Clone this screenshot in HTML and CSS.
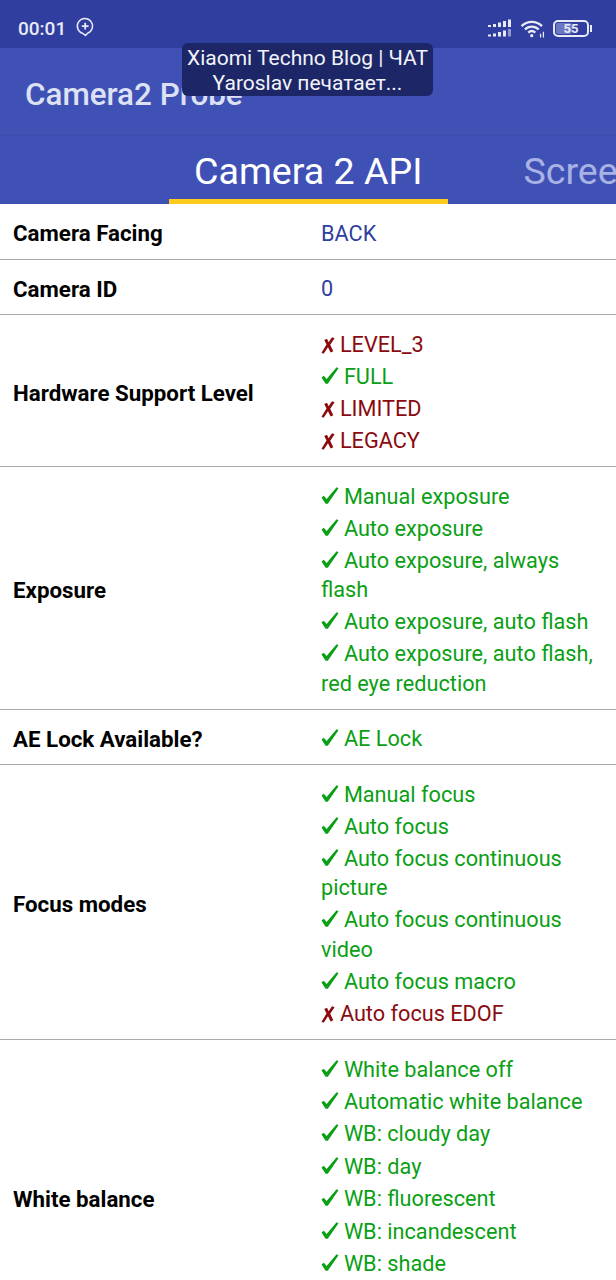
FILE: index.html
```html
<!DOCTYPE html>
<html lang="en">
<head>
  <meta charset="UTF-8">
  <title>Camera2 Probe</title>
  <link rel="stylesheet" href="styles.css">
</head>
<body>

  <svg class="sprite">
    <symbol id="check" viewBox="0 0 18 17">
      <path d="M0.500 10.500 L2.800 8.800 L5.600 12 L15.600 0.300 L17.500 1.200 L6.800 16.700 L4.600 16.700 Z"/>
    </symbol>
    <symbol id="cross" viewBox="0 0 14 17">
      <path d="M11 0.300 L13.600 1.300 L9.200 7.800 L12.300 14.200 L9.600 15.600 L7 10.300 L2.600 16.800 L0.500 15.800 L5.500 7.600 L3.300 3 L6 1.800 L7.600 5.200 Z"/>
    </symbol>
  </svg>

  <div class="status-bar">
    <span class="clock">00:01</span>
    <svg class="chat-icon" width="20" height="20" viewBox="0 0 20 20" fill="none" stroke="#e8eaf6">
      <path d="M10.500 18.500 L7.800 16.400 A7.600 7.600 0 1 1 12.600 16.200 Z" stroke-width="1.500" stroke-linejoin="round"/>
      <path d="M6.800 9.200H13.600M10.200 5.800V12.600" stroke-width="1.800"/>
    </svg>
    <div class="status-right">
      <svg width="24" height="18" viewBox="0 0 24 18" fill="#e8eaf6">
        <rect x="0" y="6" width="3" height="2"/><rect x="5" y="5" width="3" height="3"/><rect x="10" y="3.500" width="3" height="4.500"/><rect x="15" y="2" width="3" height="6"/><rect x="20" y="0.500" width="3" height="7.500"/>
        <rect x="0" y="15.500" width="3" height="2"/><rect x="5" y="14.500" width="3" height="3"/><rect x="10" y="13" width="3" height="4.500"/><rect x="15" y="11.500" width="3" height="6"/><rect x="20" y="10" width="3" height="7.500" fill="#8f98cf"/>
      </svg>
      <svg class="wifi" width="25" height="19" viewBox="0 0 26 20" fill="none" stroke="#e8eaf6" stroke-width="2.400">
        <path d="M1.500 7.500C7.500 1.500 17 1.500 23 7.500"/>
        <path d="M5 11C9 7 15.500 7 19.500 11"/>
        <path d="M8.500 14.300C10.800 12.300 13.700 12.300 16 14.300"/>
        <circle cx="12.200" cy="17.500" r="1.700" fill="#e8eaf6" stroke="none"/>
        <path d="M21.500 19.500V15.500M24.500 19.500V13.500" stroke-width="1.300"/>
      </svg>
      <div class="battery">
        <div class="battery-body">
          <div class="battery-fill"></div>
          <span class="battery-num">55</span>
        </div>
        <div class="battery-tip"></div>
      </div>
    </div>
  </div>

  <div class="toolbar">Camera2 Probe</div>

  <div class="tabs">
    <div class="tab tab-active">Camera 2 API</div>
    <div class="tab">Screen</div>
  </div>

  <div class="row">
    <div class="label">Camera Facing</div>
    <div class="value"><div class="plain">BACK</div></div>
  </div>
  <div class="row">
    <div class="label">Camera ID</div>
    <div class="value"><div class="plain">0</div></div>
  </div>
  <div class="row">
    <div class="label">Hardware Support Level</div>
    <div class="value">
      <div class="no"><svg class="x-mark"><use href="#cross"/></svg> LEVEL_3</div>
      <div class="yes"><svg class="mark"><use href="#check"/></svg> FULL</div>
      <div class="no"><svg class="x-mark"><use href="#cross"/></svg> LIMITED</div>
      <div class="no"><svg class="x-mark"><use href="#cross"/></svg> LEGACY</div>
    </div>
  </div>
  <div class="row">
    <div class="label">Exposure</div>
    <div class="value">
      <div class="yes"><svg class="mark"><use href="#check"/></svg> Manual exposure</div>
      <div class="yes"><svg class="mark"><use href="#check"/></svg> Auto exposure</div>
      <div class="yes"><svg class="mark"><use href="#check"/></svg> Auto exposure, always flash</div>
      <div class="yes"><svg class="mark"><use href="#check"/></svg> Auto exposure, auto flash</div>
      <div class="yes"><svg class="mark"><use href="#check"/></svg> Auto exposure, auto flash, red eye reduction</div>
    </div>
  </div>
  <div class="row">
    <div class="label">AE Lock Available?</div>
    <div class="value"><div class="yes"><svg class="mark"><use href="#check"/></svg> AE Lock</div></div>
  </div>
  <div class="row">
    <div class="label">Focus modes</div>
    <div class="value">
      <div class="yes"><svg class="mark"><use href="#check"/></svg> Manual focus</div>
      <div class="yes"><svg class="mark"><use href="#check"/></svg> Auto focus</div>
      <div class="yes"><svg class="mark"><use href="#check"/></svg> Auto focus continuous picture</div>
      <div class="yes"><svg class="mark"><use href="#check"/></svg> Auto focus continuous video</div>
      <div class="yes"><svg class="mark"><use href="#check"/></svg> Auto focus macro</div>
      <div class="no"><svg class="x-mark"><use href="#cross"/></svg> Auto focus EDOF</div>
    </div>
  </div>
  <div class="row">
    <div class="label">White balance</div>
    <div class="value value-long">
      <div class="yes"><svg class="mark"><use href="#check"/></svg> White balance off</div>
      <div class="yes"><svg class="mark"><use href="#check"/></svg> Automatic white balance</div>
      <div class="yes"><svg class="mark"><use href="#check"/></svg> WB: cloudy day</div>
      <div class="yes"><svg class="mark"><use href="#check"/></svg> WB: day</div>
      <div class="yes"><svg class="mark"><use href="#check"/></svg> WB: fluorescent</div>
      <div class="yes"><svg class="mark"><use href="#check"/></svg> WB: incandescent</div>
      <div class="yes"><svg class="mark"><use href="#check"/></svg> WB: shade</div>
      <div class="yes"><svg class="mark"><use href="#check"/></svg> WB: twilight</div>
      <div class="yes"><svg class="mark"><use href="#check"/></svg> WB: warm fluorescent</div>
    </div>
  </div>

  <div class="toast">
    <div>Xiaomi Techno Blog | ЧАТ</div>
    <div>Yaroslav печатает...</div>
  </div>

</body>
</html>
```

FILE: styles.css
```css
html, body {
  height: 1280px;
  overflow: hidden;
}

body {
  margin: 0;
  position: relative;
  font-family: Roboto, sans-serif;
  background-color: white;
}

.sprite {
  display: none;
}

.status-bar {
  height: 48px;
  box-sizing: border-box;
  display: flex;
  align-items: center;
  padding: 8px 24px 0 18px;
  background-color: #303f9f;
  color: #e8eaf6;
}

.clock {
  font-size: 19px;
  font-weight: 500;
}

.chat-icon {
  margin-left: 9px;
  margin-top: -2px;
}

.status-right {
  margin-left: auto;
  display: flex;
  align-items: center;
  gap: 8px;
}

.battery {
  display: flex;
  align-items: center;
  gap: 1px;
}

.battery-body {
  width: 36px;
  height: 17px;
  box-sizing: border-box;
  border: 2px solid #e8eaf6;
  border-radius: 5px;
  position: relative;
  display: flex;
  align-items: center;
  justify-content: center;
}

.battery-fill {
  position: absolute;
  left: 1px;
  top: 1px;
  bottom: 1px;
  width: 16px;
  border-radius: 2px;
  background-color: #6b78c4;
}

.battery-num {
  position: relative;
  font-size: 13px;
  font-weight: 700;
}

.battery-tip {
  width: 2px;
  height: 7px;
  background-color: #e8eaf6;
}

.toolbar {
  height: 88px;
  box-sizing: border-box;
  padding: 27px 0 0 25px;
  background-color: #3f51b5;
  color: #dde1f4;
  font-size: 31.4px;
  font-weight: 500;
  line-height: 40px;
  border-bottom: 1px solid #3b4cab;
}

.tabs {
  height: 68px;
  display: flex;
  padding-left: 169px;
  background-color: #3f51b5;
  overflow: hidden;
  white-space: nowrap;
}

.tab {
  padding: 0 25px;
  font-size: 37.6px;
  line-height: 70px;
  color: #a9b2e4;
}

.tab-active {
  height: 63px;
  padding-right: 26px;
  border-bottom: 5px solid #fdca1e;
  color: white;
  margin-right: 50px;
}

.row {
  display: grid;
  grid-template-columns: 308px 1fr;
  align-items: center;
  padding: 14.5px 20px 10.7px 13px;
  border-bottom: 1px solid #aaa;
}

.label {
  font-size: 22.3px;
  font-weight: 700;
  color: black;
}

.value {
  display: flex;
  flex-direction: column;
  gap: 2.5px;
  font-size: 21.7px;
  line-height: 29.5px;
}

.value-long {
  gap: 2.9px;
}

.plain {
  color: #303f9f;
}

.yes {
  color: #0a9f14;
}

.no {
  color: #8b0a0f;
}

.mark {
  width: 18px;
  height: 17px;
  fill: currentColor;
  margin-right: -0.5px;
}

.x-mark {
  width: 14px;
  height: 17px;
  fill: currentColor;
  vertical-align: -2px;
  margin-right: -0.5px;
}

.toast {
  position: absolute;
  left: 182px;
  top: 43px;
  width: 251px;
  height: 53px;
  box-sizing: border-box;
  padding-top: 3px;
  border-radius: 6px;
  background-color: #1d2767;
  color: #f2f3fa;
  font-size: 21px;
  line-height: 25px;
  text-align: center;
  white-space: nowrap;
}
```
